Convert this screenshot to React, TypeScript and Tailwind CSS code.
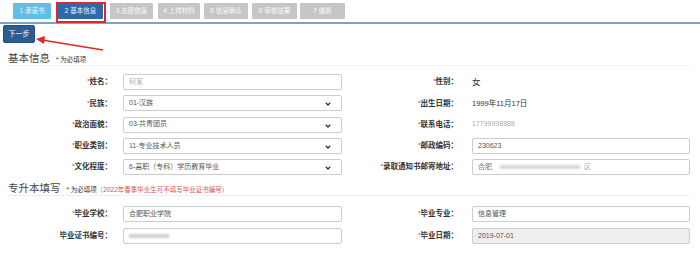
import React from 'react';

const font = { fontFamily: '"Liberation Sans", "Noto Sans CJK SC", sans-serif' };

const steps = [
    { label: '1 承诺书', cls: 'ml-[13px] w-[38px] bg-[#63bde6]' },
    { label: '2 基本信息', cls: 'ml-[7px] w-[45px] bg-[#2e6aa8]' },
    { label: '3 志愿信息', cls: 'ml-[7px] w-[43px] bg-[#c6c6c6]' },
    { label: '4 上传材料', cls: 'ml-[5px] w-[42px] bg-[#c6c6c6]' },
    { label: '5 信息确认', cls: 'ml-[4px] w-[44px] bg-[#c6c6c6]' },
    { label: '6 审核结果', cls: 'ml-[4px] w-[45px] bg-[#c6c6c6]' },
    { label: '7 缴费', cls: 'ml-[3px] w-[45px] bg-[#c6c6c6]' },
];

const Chevron = () => (
    <svg width="6" height="4" viewBox="0 0 6 4" className="absolute right-[10px] top-[6px]">
        <path d="M0.8 0.8 L3 3 L5.2 0.8" fill="none" stroke="#333" strokeWidth="1.3" />
    </svg>
);

const Label: React.FC<{ text: string; req?: boolean; w: string }> = ({ text, req = true, w }) => (
    <div className={`${w} shrink-0 text-right text-[7.5px] font-bold text-[#333] leading-none`}>
        {req && <span className="text-[#d9534f] text-[6px] align-top">*</span>}
        {text}：
    </div>
);

const Field: React.FC<{ children?: React.ReactNode; select?: boolean; disabled?: boolean }> = ({ children, select, disabled }) => (
    <div
        className={`relative flex-1 h-[16px] border border-[#ccc] rounded-[2px] flex items-center pl-[5px] text-[7px] text-[#555] ${disabled ? 'bg-[#eee]' : 'bg-white'}`}
    >
        {children}
        {select && <Chevron />}
    </div>
);

const Blur: React.FC<{ children: React.ReactNode; cls?: string }> = ({ children, cls = '' }) => (
    <span className={`blur-[0.7px] text-[#aaa] ${cls}`}>{children}</span>
);

const LeftRow: React.FC<{ label: string; req?: boolean; children: React.ReactNode }> = ({ label, req, children }) => (
    <div className="flex items-center h-[16px]">
        <Label text={label} req={req} w="w-[104px]" />
        <div className="ml-[11px] flex-1 flex">{children}</div>
    </div>
);

const RightRow: React.FC<{ label: string; req?: boolean; children: React.ReactNode }> = ({ label, req, children }) => (
    <div className="flex items-center h-[16px]">
        <Label text={label} req={req} w="w-[116px]" />
        <div className="ml-[14px] flex-1 flex">{children}</div>
    </div>
);

const App: React.FC = () => {
    return (
        <div className="relative w-[700px] h-[277px] bg-white overflow-hidden" style={font}>
            {/* step tabs */}
            <div className="flex h-[22px] pt-[3px]">
                {steps.map((s) => (
                    <div
                        key={s.label}
                        className={`${s.cls} h-[16px] flex items-center justify-center text-[6.5px] text-white/90 rounded-[1px]`}
                    >
                        {s.label}
                    </div>
                ))}
            </div>
            <div className="h-[2px] bg-[#7da2c3]" />

            <div className="mt-[1px] ml-[3px] w-[32px] h-[18px] rounded-[2px] bg-[#2b5c93] border border-[#244e7e] flex items-center justify-center text-white text-[7px]">
                下一步
            </div>

            {/* 基本信息 */}
            <div className="pl-[8px] pr-[10px] mt-[6px]">
                <div className="flex items-end h-[17px] pb-[2px] border-b border-[#eee]">
                    <span className="text-[10.5px] font-normal text-[#444] leading-none">基本信息</span>
                    <span className="ml-[6px] text-[6.5px] text-[#333] leading-none">* 为必填项</span>
                </div>

                <div className="grid grid-cols-[334px_1fr] mt-[8px] gap-y-[5.25px]">
                    <LeftRow label="姓名">
                        <Field><Blur>何某</Blur></Field>
                    </LeftRow>
                    <RightRow label="性别">
                        <span className="text-[8.5px] text-[#333]">女</span>
                    </RightRow>

                    <LeftRow label="民族">
                        <Field select>01-汉族</Field>
                    </LeftRow>
                    <RightRow label="出生日期">
                        <span className="text-[7.5px] text-[#333]">1999年11月17日</span>
                    </RightRow>

                    <LeftRow label="政治面貌">
                        <Field select>03-共青团员</Field>
                    </LeftRow>
                    <RightRow label="联系电话">
                        <Blur cls="text-[7px]">17799998888</Blur>
                    </RightRow>

                    <LeftRow label="职业类别">
                        <Field select>11-专业技术人员</Field>
                    </LeftRow>
                    <RightRow label="邮政编码">
                        <Field>230623</Field>
                    </RightRow>

                    <LeftRow label="文化程度">
                        <Field select>6-高职（专科）学历教育毕业</Field>
                    </LeftRow>
                    <RightRow label="录取通知书邮寄地址">
                        <Field>
                            <span className="text-[#777] blur-[0.4px]">合肥</span>
                            <span className="ml-[8px] w-[80px] h-[4px] bg-[#d8d8d8] blur-[1px]" />
                            <Blur cls="ml-[4px]">区</Blur>
                        </Field>
                    </RightRow>
                </div>
            </div>

            {/* 专升本填写 */}
            <div className="pl-[8px] pr-[10px] mt-[5px]">
                <div className="flex items-end h-[16px] pb-[2px] border-b border-[#eee]">
                    <span className="text-[10.5px] font-normal text-[#444] leading-none">专升本填写</span>
                    <span className="ml-[6px] text-[6.5px] text-[#333] leading-none">
                        * 为必填项<span className="text-[#d9534f]">（2022年春季毕业生可不填写毕业证书编号）</span>
                    </span>
                </div>

                <div className="grid grid-cols-[334px_1fr] mt-[10px] gap-y-[6px]">
                    <LeftRow label="毕业学校">
                        <Field>合肥职业学院</Field>
                    </LeftRow>
                    <RightRow label="毕业专业">
                        <Field>信息管理</Field>
                    </RightRow>

                    <LeftRow label="毕业证书编号" req={false}>
                        <Field>
                            <span className="w-[40px] h-[4px] bg-[#d0d0d0] blur-[1px]" />
                        </Field>
                    </LeftRow>
                    <RightRow label="毕业日期">
                        <Field disabled>2019-07-01</Field>
                    </RightRow>
                </div>
            </div>

            {/* annotation: red box + arrow */}
            <div className="absolute left-[56px] top-[2px] w-[50px] h-[21px] border-2 border-[#e0282b] pointer-events-none" />
            <svg className="absolute left-0 top-0 pointer-events-none" width="120" height="60">
                <line x1="103" y1="50" x2="42" y2="40" stroke="#e0282b" strokeWidth="1.6" />
                <polygon points="36,39 45,36 44,44" fill="#e0282b" />
            </svg>
        </div>
    );
};

export default App;
